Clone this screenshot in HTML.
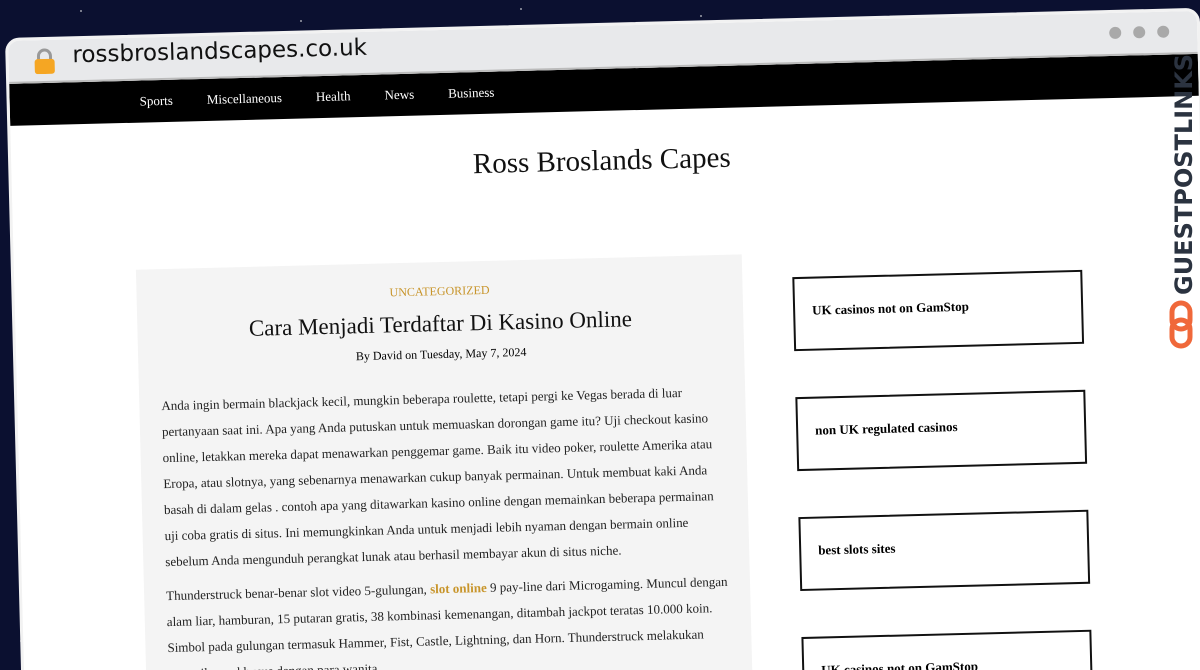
<!DOCTYPE html>
<html><head><style>
*{margin:0;padding:0;box-sizing:border-box}
html,body{width:1200px;height:670px;overflow:hidden}
body{background:#0b1030;font-family:"Liberation Serif",serif}
#wrap{position:relative;width:1200px;height:670px;overflow:hidden;background:#0b1030}
.star{position:absolute;background:#fff;border-radius:50%;opacity:.6}
#win{position:absolute;left:5px;top:38px;width:1195px;height:700px;background:#fff;border-radius:14px;transform:rotate(-1.45deg);transform-origin:0 0;overflow:hidden;border:3px solid #f2f2f2}
.chrome{height:43px;background:#e8e9eb;position:relative;border-bottom:2px solid #bbb}
.lock{position:absolute;left:25px;top:8px;width:22px;height:26px}
.url{position:absolute;left:64px;top:3px;font-family:"DejaVu Sans",sans-serif;font-size:23px;color:#111;font-weight:500}
.dots{position:absolute;right:28px;top:13px}
.dots span{display:inline-block;width:12px;height:12px;border-radius:50%;background:#a9a9a9;margin-left:12px}
.nav{height:42px;background:#000;color:#fff;font-size:13px;padding-left:130px;padding-top:13px}
.nav span{margin-right:34px}
h1{font-weight:normal;font-size:29px;text-align:center;margin-top:34px;color:#111;position:relative;left:-4px}
.art{position:absolute;left:122px;top:232px;width:606px;height:600px;background:#f4f4f4;padding:22px 22px}
.cat{color:#c8952b;font-size:12px;text-align:center}
h2{font-weight:normal;font-size:23px;text-align:center;margin-top:12px;color:#111}
.by{font-size:12px;text-align:center;margin-top:10px}
.art p{font-size:13px;line-height:26px;margin-top:24px;color:#222}
.art p+p{margin-top:8px}
.art a{color:#c8952b;font-weight:bold;text-decoration:none}
.box{position:absolute;left:778px;width:290px;height:74px;border:2px solid #111;font-weight:bold;font-size:13px;padding:24px 17px}
.gp{position:absolute;left:1162px;top:55px;width:40px;height:300px}
</style></head><body><div id="wrap">
<div class="star" style="left:80px;top:10px;width:2px;height:2px"></div>
<div class="star" style="left:300px;top:20px;width:2px;height:2px"></div>
<div class="star" style="left:520px;top:8px;width:2px;height:2px"></div>
<div class="star" style="left:700px;top:15px;width:2px;height:2px"></div>
<div class="star" style="left:20px;top:640px;width:2px;height:2px"></div>
<div id="win">
<div class="chrome">
<svg class="lock" viewBox="0 0 22 26"><path d="M5 12V8a6 6 0 0 1 12 0v4" fill="none" stroke="#999" stroke-width="3"/><rect x="1" y="11" width="20" height="15" rx="3" fill="#f5a623"/></svg>
<div class="url">rossbroslandscapes.co.uk</div>
<div class="dots"><span></span><span></span><span></span></div>
</div>
<div class="nav"><span>Sports</span><span>Miscellaneous</span><span>Health</span><span>News</span><span>Business</span></div>
<h1>Ross Broslands Capes</h1>
<div class="art">
<div class="cat">UNCATEGORIZED</div>
<h2>Cara Menjadi Terdaftar Di Kasino Online</h2>
<div class="by">By David on Tuesday, May 7, 2024</div>
<p>Anda ingin bermain blackjack kecil, mungkin beberapa roulette, tetapi pergi ke Vegas berada di luar pertanyaan saat ini. Apa yang Anda putuskan untuk memuaskan dorongan game itu? Uji checkout kasino online, letakkan mereka dapat menawarkan penggemar game. Baik itu video poker, roulette Amerika atau Eropa, atau slotnya, yang sebenarnya menawarkan cukup banyak permainan. Untuk membuat kaki Anda basah di dalam gelas . contoh apa yang ditawarkan kasino online dengan memainkan beberapa permainan uji coba gratis di situs. Ini memungkinkan Anda untuk menjadi lebih nyaman dengan bermain online sebelum Anda mengunduh perangkat lunak atau berhasil membayar akun di situs niche.</p>
<p>Thunderstruck benar-benar slot video 5-gulungan, <a>slot online</a> 9 pay-line dari Microgaming. Muncul dengan alam liar, hamburan, 15 putaran gratis, 38 kombinasi kemenangan, ditambah jackpot teratas 10.000 koin. Simbol pada gulungan termasuk Hammer, Fist, Castle, Lightning, dan Horn. Thunderstruck melakukan pemeriksaan khusus dengan para wanita.</p>
</div>
<div class="box" style="top:256px">UK casinos not on GamStop</div>
<div class="box" style="top:376px">non UK regulated casinos</div>
<div class="box" style="top:496px">best slots sites</div>
<div class="box" style="top:616px">UK casinos not on GamStop</div>
</div>
<svg class="gp" viewBox="0 0 40 300">
<text transform="translate(30,240) rotate(-90)" font-family="DejaVu Sans,sans-serif" font-weight="bold" font-size="24" fill="#2b3340">GUESTPOSTLINKS</text>
<rect x="10" y="248" width="18" height="26" rx="9" fill="none" stroke="#f0683a" stroke-width="5"/>
<rect x="10" y="265" width="18" height="26" rx="9" fill="none" stroke="#f0683a" stroke-width="5"/>
</svg>
</div></body></html>
